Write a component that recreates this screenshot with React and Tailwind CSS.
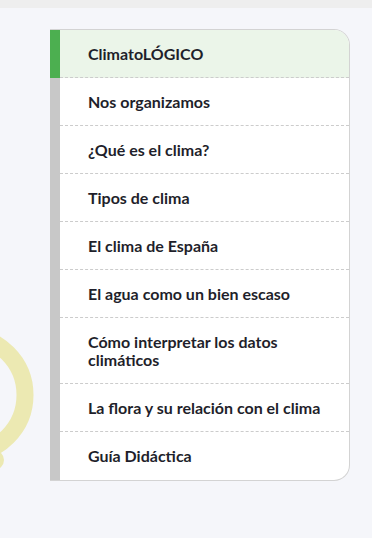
const items = [
  'ClimatoLÓGICO',
  'Nos organizamos',
  '¿Qué es el clima?',
  'Tipos de clima',
  'El clima de España',
  'El agua como un bien escaso',
  'Cómo interpretar los datos climáticos',
  'La flora y su relación con el clima',
  'Guía Didáctica',
];

const App = () => {
  return (
    <div
      className="relative h-[538px] w-[372px] overflow-hidden bg-[#f5f6fa]"
      style={{ fontFamily: 'Lato, "Noto Sans", sans-serif' }}
    >
      <div className="h-2 bg-[#eeeeee]" />
      {/* decorative ring */}
      <svg
        className="absolute left-0 top-[320px]"
        width="50"
        height="170"
        viewBox="0 0 50 170"
      >
        <circle cx="-34" cy="75" r="59" fill="none" stroke="#ece9b2" strokeWidth="17" />
        <circle cx="-6" cy="140" r="10" fill="#ece9b2" />
      </svg>
      <nav className="relative ml-[50px] mt-[21px] w-[300px] overflow-hidden rounded-r-[16px] border-y border-r border-[#d3d3d3] bg-white">
        <ul>
          {items.map((itm, i) => (
            <li
              key={i}
              className={`flex ${i === 0 ? 'bg-[#ebf5e9]' : ''}`}
            >
              <div
                className={`w-[10px] shrink-0 ${i === 0 ? 'bg-[#4caf50]' : 'bg-[#c8c8c8]'}`}
              />
              <div
                className={`flex-1 pb-[14px] pl-[28px] pr-4 pt-[15px] text-[16px] font-bold leading-[18px] text-[#1f1f2b] ${
                  i < items.length - 1 ? 'border-b border-dashed border-[#cccccc]' : 'pb-[15px]'
                }`}
              >
                {itm}
              </div>
            </li>
          ))}
        </ul>
      </nav>
    </div>
  );
};

export default App;
